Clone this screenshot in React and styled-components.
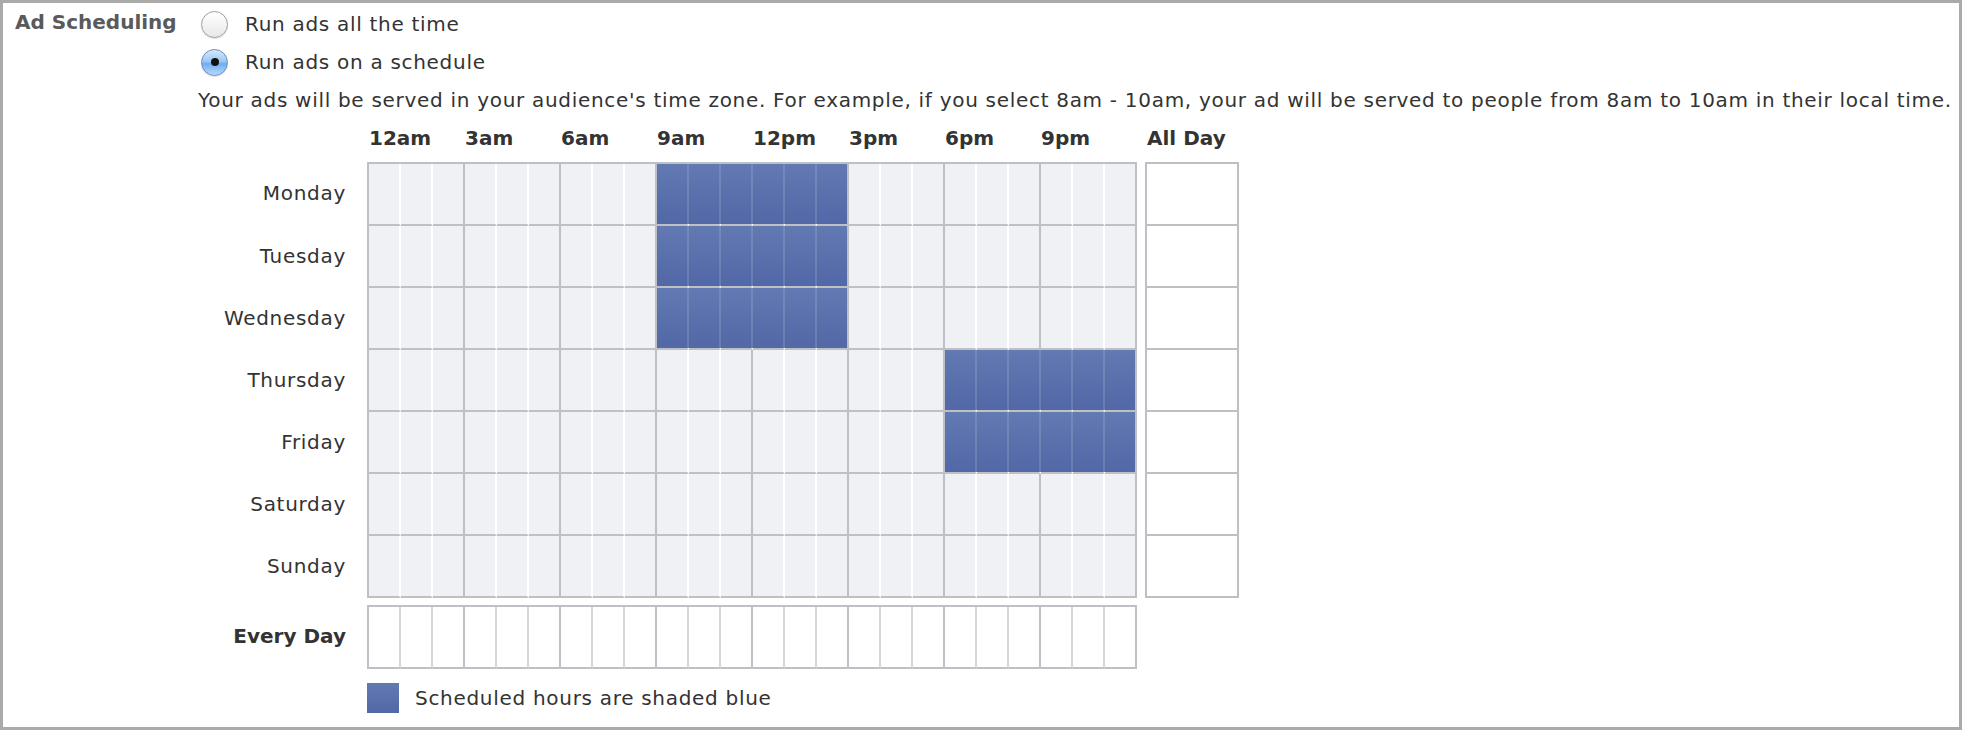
import styled, { createGlobalStyle, css } from 'styled-components'

const GlobalStyle = createGlobalStyle`
  html, body { margin: 0; padding: 0; background: #fff; }
  body {
    font-family: "DejaVu Sans", "Liberation Sans", sans-serif;
    font-size: 20px;
    letter-spacing: 0.7px;
    color: #333;
  }
`

const GRID_LINE = '#bfc0c5'
const SOFT_LINE = '#d6d6da'
const CELL_BG = '#f0f1f5'

const days = ['Monday', 'Tuesday', 'Wednesday', 'Thursday', 'Friday', 'Saturday', 'Sunday']
const hourLabels = ['12am', '3am', '6am', '9am', '12pm', '3pm', '6pm', '9pm']
// [from, to) hour ranges that are scheduled
const schedule = {
  Monday: [9, 15],
  Tuesday: [9, 15],
  Wednesday: [9, 15],
  Thursday: [18, 24],
  Friday: [18, 24],
}
const isOn = (day, h) => {
  const r = schedule[day]
  return !!r && h >= r[0] && h < r[1]
}

const Frame = styled.div`
  box-sizing: border-box;
  width: 100%;
  height: 730px;
  border: 3px solid #aaa;
  padding: 2px 0 0 12px;
  display: flex;
`

const SectionLabel = styled.div`
  width: 183px;
  flex-shrink: 0;
  font-weight: bold;
  letter-spacing: 0;
  color: #5a5a5a;
  line-height: 24px;
  margin-top: 5px;
`

const Content = styled.div`
  display: flex;
  flex-direction: column;
`

const RadioRow = styled.label`
  height: 38px;
  display: flex;
  align-items: center;
  padding-left: 3px;
  gap: 17px;
  line-height: 24px;
`

const Radio = styled.span`
  width: 27px;
  height: 27px;
  box-sizing: border-box;
  border-radius: 50%;
  border: 1px solid #9f9f9f;
  background: linear-gradient(#ffffff, #e8e8e8);
  box-shadow: 0 1px 1px rgba(0, 0, 0, 0.12);
  display: flex;
  align-items: center;
  justify-content: center;
  ${p => p.$checked && css`
    border-color: #6a8bb8;
    background: linear-gradient(#d6e9fc 0%, #9cc8f5 45%, #72adf0 55%, #b4dafd 100%);
    &::after {
      content: '';
      width: 8px;
      height: 8px;
      border-radius: 50%;
      background: #111;
    }
  `}
`

const Note = styled.div`
  height: 38px;
  display: flex;
  align-items: center;
  line-height: 24px;
  white-space: nowrap;
`

const Schedule = styled.div`
  display: flex;
  flex-direction: column;
`

const HeaderRow = styled.div`
  height: 38px;
  display: flex;
  align-items: center;
  padding-left: 171px;
  margin-bottom: 5px;
  font-weight: bold;
  letter-spacing: 0;
  line-height: 24px;
`

const HourLabel = styled.div`
  width: 96px;
`

const AllDayLabel = styled.div`
  margin-left: 10px;
`

const DayLabel = styled.div`
  width: 148px;
  margin-right: 21px;
  display: flex;
  align-items: center;
  justify-content: flex-end;
  padding-bottom: 3px;
  box-sizing: border-box;
  line-height: 24px;
  ${p => p.$bold && css`
    font-weight: bold;
    letter-spacing: 0;
  `}
`

const HourStrip = styled.div`
  display: flex;
  border-left: 2px solid ${GRID_LINE};
  ${p => p.$top && css`border-top: 2px solid ${GRID_LINE};`}
`

const HourCell = styled.div`
  width: 30px;
  height: 60px;
  border-right: 2px solid ${p => p.$edge};
  border-bottom: 2px solid ${GRID_LINE};
  background: ${p => (p.$on ? 'linear-gradient(#6379b2, #5268a7)' : p.$bg)};
`

const AllDayCell = styled.div`
  width: 90px;
  margin-left: 8px;
  border: 2px solid ${GRID_LINE};
  border-top-width: ${p => (p.$top ? '2px' : '0')};
  background: #fff;
`

const DayRow = styled.div`
  display: flex;
`

const EveryDayRow = styled(DayRow)`
  margin-top: 7px;
`

const Legend = styled.div`
  display: flex;
  align-items: center;
  gap: 16px;
  margin: 14px 0 0 169px;
  line-height: 24px;
`

const Swatch = styled.span`
  width: 32px;
  height: 30px;
  background: linear-gradient(#6379b2, #5268a7);
`

function edgeColor(day, h) {
  const major = h % 3 === 2
  if (isOn(day, h) && isOn(day, h + 1)) return 'rgba(255,255,255,0.13)'
  return major ? GRID_LINE : '#ffffff'
}

const hours = Array.from({ length: 24 }, (_, i) => i)

export default function App() {
  return (
    <>
      <GlobalStyle />
      <Frame>
        <SectionLabel>Ad Scheduling</SectionLabel>
        <Content>
          <RadioRow>
            <Radio />
            Run ads all the time
          </RadioRow>
          <RadioRow>
            <Radio $checked />
            Run ads on a schedule
          </RadioRow>
          <Note>
            Your ads will be served in your audience's time zone. For example, if you select 8am - 10am, your ad will be served to people from 8am to 10am in their local time.
          </Note>
          <Schedule>
            <HeaderRow>
              {hourLabels.map(l => <HourLabel key={l}>{l}</HourLabel>)}
              <AllDayLabel>All Day</AllDayLabel>
            </HeaderRow>
            {days.map((day, i) => (
              <DayRow key={day}>
                <DayLabel>{day}</DayLabel>
                <HourStrip $top={i === 0}>
                  {hours.map(h => (
                    <HourCell key={h} $on={isOn(day, h)} $bg={CELL_BG} $edge={edgeColor(day, h)} />
                  ))}
                </HourStrip>
                <AllDayCell $top={i === 0} />
              </DayRow>
            ))}
            <EveryDayRow>
              <DayLabel $bold>Every Day</DayLabel>
              <HourStrip $top>
                {hours.map(h => (
                  <HourCell key={h} $bg="#fff" $edge={h % 3 === 2 ? GRID_LINE : SOFT_LINE} />
                ))}
              </HourStrip>
            </EveryDayRow>
            <Legend>
              <Swatch />
              Scheduled hours are shaded blue
            </Legend>
          </Schedule>
        </Content>
      </Frame>
    </>
  )
}
